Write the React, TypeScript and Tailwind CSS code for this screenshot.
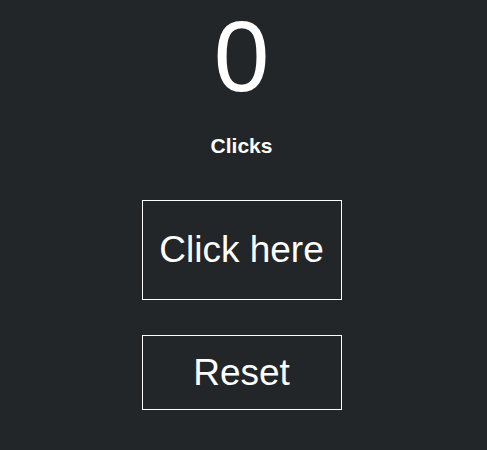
import { useState } from "react";

export default function App() {
  const [count, setCount] = useState(0);

  return (
    <div className="min-h-[450px] bg-[#222629] text-white font-['Liberation_Sans',Arial,sans-serif] flex flex-col items-center pr-[4px]">
      <h1 className="text-[100px] leading-[112px] font-normal">{count}</h1>
      <p className="mt-[22px] text-[21px] leading-[24px] font-bold">Clicks</p>
      <button
        onClick={() => setCount((c) => c + 1)}
        className="mt-[42px] w-[200px] h-[100px] border border-white text-[37px] flex items-center justify-center"
      >
        Click here
      </button>
      <button
        onClick={() => setCount(0)}
        className="mt-[35px] w-[200px] h-[75px] border border-white text-[37px] flex items-center justify-center"
      >
        Reset
      </button>
    </div>
  );
}
